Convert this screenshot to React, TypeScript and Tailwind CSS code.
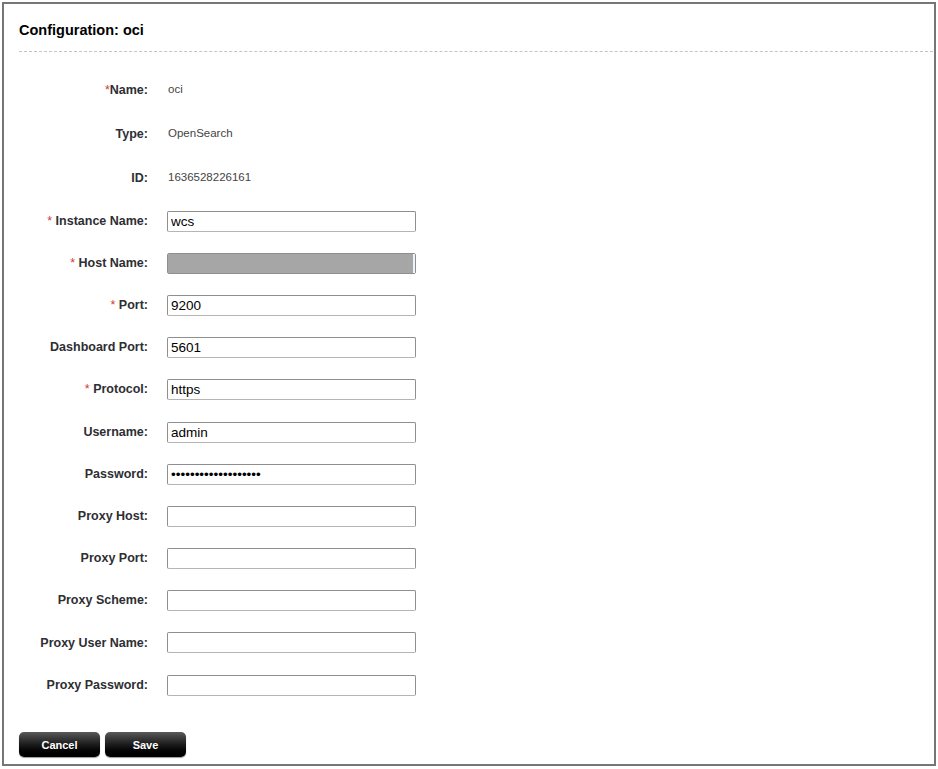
import React from 'react';

interface Field {
    label: string;
    required?: boolean;
    value?: string;
    type?: 'text' | 'password';
    redacted?: boolean;
}

const infoRows: { label: string; value: string; required?: boolean }[] = [
    { label: 'Name:', value: 'oci', required: true },
    { label: 'Type:', value: 'OpenSearch' },
    { label: 'ID:', value: '1636528226161' },
];

const fields: Field[] = [
    { label: 'Instance Name:', required: true, value: 'wcs' },
    { label: 'Host Name:', required: true, redacted: true },
    { label: 'Port:', required: true, value: '9200' },
    { label: 'Dashboard Port:', value: '5601' },
    { label: 'Protocol:', required: true, value: 'https' },
    { label: 'Username:', value: 'admin' },
    { label: 'Password:', value: 'xxxxxxxxxxxxxxxxxxx', type: 'password' },
    { label: 'Proxy Host:' },
    { label: 'Proxy Port:' },
    { label: 'Proxy Scheme:' },
    { label: 'Proxy User Name:' },
    { label: 'Proxy Password:' },
];

const font = { fontFamily: '"Liberation Sans", Arial, sans-serif' };

function Button({ children }: { children: React.ReactNode }) {
    return (
        <button className="w-[81px] h-[25px] rounded-[5px] bg-gradient-to-b from-[#5a5a5a] via-[#1c1c1c] to-[#000] text-white font-bold text-[11px] shadow-[0_1px_1px_#9a9a9a]">
            {children}
        </button>
    );
}

export default function App() {
    return (
        <div className="p-[2px] bg-white text-[#2e2e33]" style={font}>
            <div className="border-2 border-[#767676] h-[764px] w-[934px] flex flex-col">
                {/* Header */}
                <h2 className="pt-[18px] pl-[15px] text-[14.5px] leading-[16px] font-bold text-black mb-[13px]">
                    Configuration: oci
                </h2>
                <div className="ml-[15px] mr-[1px] border-t border-dashed border-[#c4c4c4]"></div>

                {/* Form */}
                <div className="pt-[16px] flex flex-col">
                    {infoRows.map((row) => (
                        <div key={row.label} className="h-[44px] flex items-center">
                            <div className="w-[144px] text-right text-[12.5px] font-bold">
                                {row.required && <span className="text-[#cc3a3a] font-normal">*</span>}
                                {row.label}
                            </div>
                            <div className="ml-[20px] text-[11.5px] text-[#444]">{row.value}</div>
                        </div>
                    ))}

                    {fields.map((f) => (
                        <div key={f.label} className="h-[42.2px] flex items-center">
                            <div className="w-[144px] text-right text-[12.5px] font-bold">
                                {f.required && <span className="text-[#cc3a3a] font-normal">* </span>}
                                {f.label}
                            </div>
                            {f.redacted ? (
                                <div className="ml-[19px] w-[249px] h-[21px] border border-[#8f8f8f] rounded-[2px] flex">
                                    <div className="flex-1 bg-[#a6a6a6]"></div>
                                    <div className="w-[2px] bg-[#eef2fa]"></div>
                                </div>
                            ) : (
                                <input
                                    readOnly
                                    type={f.type ?? 'text'}
                                    value={f.value ?? ''}
                                    className="ml-[19px] w-[249px] h-[21px] border border-[#8f8f8f] border-b-[#b5b5b5] rounded-[2px] px-[3px] text-[13.5px] text-black outline-none"
                                    style={font}
                                />
                            )}
                        </div>
                    ))}
                </div>

                {/* Actions */}
                <div className="mt-[26px] ml-[15px] flex gap-[5px]">
                    <Button>Cancel</Button>
                    <Button>Save</Button>
                </div>
            </div>
        </div>
    );
}
